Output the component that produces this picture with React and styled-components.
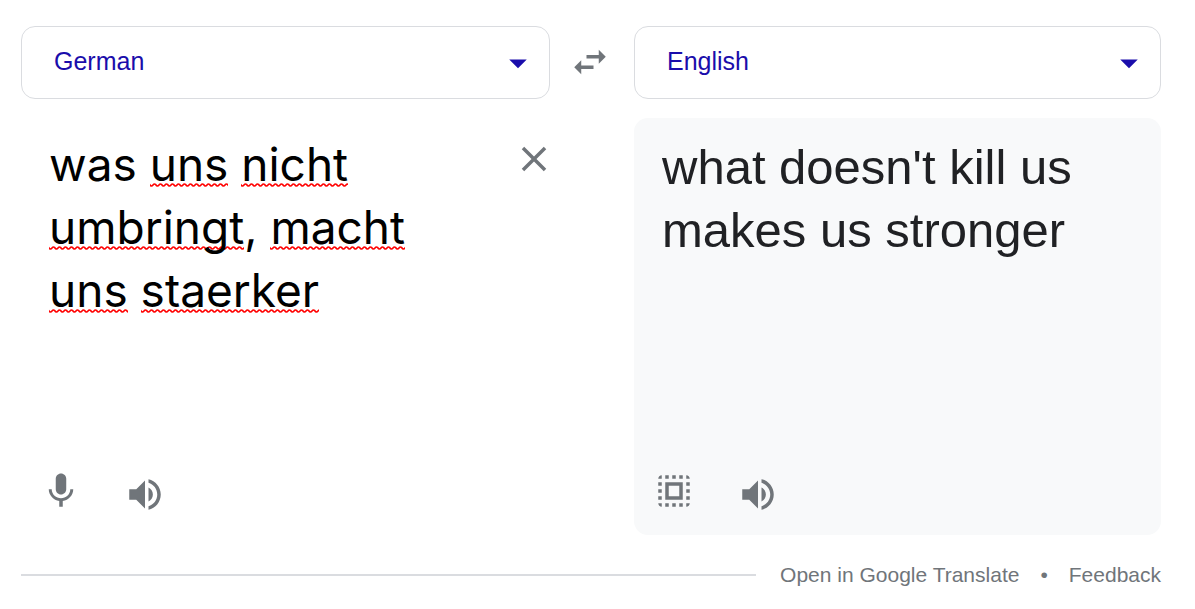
import React, { useState } from "react";
import styled, { createGlobalStyle } from "styled-components";

const GlobalStyle = createGlobalStyle`
  *, *::before, *::after { box-sizing: border-box; }
  body {
    margin: 0;
    background: #fff;
    color: #202124;
    font-family: "Liberation Sans", Arial, sans-serif;
  }
`;

const Widget = styled.main`
  padding: 26px 34px 16px 21px;
`;

const Columns = styled.div`
  display: grid;
  grid-template-columns: 529fr 84px 527fr;
  row-gap: 19px;
`;

const LanguageBox = styled.label`
  display: grid;
  align-items: center;
  height: 73px;
  color: #1a0dab;

  > * { grid-area: 1 / 1; }

  > svg {
    justify-self: end;
    margin-right: 11px;
    pointer-events: none;
  }
`;

const LanguageSelect = styled.select`
  appearance: none;
  width: 100%;
  height: 100%;
  padding: 0 56px 3px 32px;
  border: 1px solid #dadce0;
  border-radius: 14px;
  background: #fff;
  color: inherit;
  font: 25px "Liberation Sans", Arial, sans-serif;
  cursor: pointer;
`;

const IconButton = styled.button`
  display: flex;
  flex: none;
  padding: 0;
  border: 0;
  background: none;
  color: #70757a;
  cursor: pointer;
`;

const SwapCell = styled.div`
  display: flex;
  align-items: center;
  justify-content: center;
  padding: 0 4px 2px 0;
`;

const Panel = styled.section`
  display: flex;
  flex-direction: column;
  justify-content: space-between;
  min-height: 417px;
  padding: 15px 28px 23px;
  border-radius: 14px;
  background: ${(p) => (p.$filled ? "#f8f9fa" : "#fff")};
`;

const SourcePanel = styled(Panel)`
  padding-right: 0;
`;

const TargetPanel = styled(Panel)`
  grid-column: 3;
`;

const SourceRow = styled.div`
  display: flex;
  align-items: flex-start;
  justify-content: space-between;
`;

const ClearCell = styled.div`
  flex: none;
  padding: 5px 0;
  margin-right: -5px;
`;

const Editor = styled.div`
  display: grid;
  flex: 1;
  max-width: 420px;
  font: 46px/63px Inter, "Liberation Sans", sans-serif;
  color: #000;

  > * {
    grid-area: 1 / 1;
    margin: 0;
    padding: 0;
    white-space: pre-wrap;
    overflow-wrap: break-word;
  }
`;

const SpellLayer = styled.div`
  color: transparent;
  pointer-events: none;
`;

/* One 6px period of the red spell-check wave, repeated along the word. */
const squiggle =
  "data:image/svg+xml,%3Csvg xmlns='http://www.w3.org/2000/svg' width='6' height='4'%3E%3Cpath d='M-3 2Q-1.5 0 0 2T3 2T6 2T9 2' fill='none' stroke='red' stroke-width='1.6'/%3E%3C/svg%3E";

const Misspelled = styled.span`
  background: url("${squiggle}") 0 47px repeat-x;
`;

const SourceInput = styled.textarea`
  width: 100%;
  border: 0;
  outline: 0;
  resize: none;
  overflow: hidden;
  background: transparent;
  color: inherit;
  font: inherit;
`;

const Translation = styled.p`
  margin: 0;
  padding-top: 3px;
  font-size: 49px;
  line-height: 63px;
`;

const Tools = styled.div`
  display: flex;
  gap: 42px;
  margin-left: -9px;
`;

const Footer = styled.footer`
  display: flex;
  align-items: center;
  margin-top: 28px;
  color: #70757a;
  font-size: 21px;
  line-height: 24px;
`;

const Rule = styled.hr`
  flex: 1;
  height: 2px;
  margin: 0 24px 0 0;
  border: 0;
  background: #dadce0;
`;

const FooterLink = styled.a`
  color: inherit;
  text-decoration: none;
`;

const Dot = styled.span`
  padding: 0 21px;
`;

const paths = {
  caret: "M7 10l5 5 5-5z",
  swap: "M6.99 11L3 15l3.99 4v-3H14v-2H6.99v-3zM21 9l-3.99-4v3H10v2h7.01v3L21 9z",
  close:
    "M19 6.41L17.59 5 12 10.59 6.41 5 5 6.41 10.59 12 5 17.59 6.41 19 12 13.41 17.59 19 19 17.59 13.41 12z",
  mic: "M12 14c1.66 0 2.99-1.34 2.99-3L15 5c0-1.66-1.34-3-3-3S9 3.34 9 5v6c0 1.66 1.34 3 3 3zm5.3-3c0 3-2.54 5.1-5.3 5.1S6.7 14 6.7 11H5c0 3.41 2.72 6.23 6 6.72V21h2v-3.28c3.28-.48 6-3.3 6-6.72h-1.7z",
  speaker:
    "M3 9v6h4l5 5V4L7 9H3zm13.5 3c0-1.77-1.02-3.29-2.5-4.03v8.05c1.48-.73 2.5-2.25 2.5-4.02zM14 3.23v2.06c2.89.86 5 3.54 5 6.71s-2.11 5.85-5 6.71v2.06c4.01-.91 7-4.49 7-8.77s-2.99-7.86-7-8.77z",
  selectAll:
    "M3 5h2V3c-1.1 0-2 .9-2 2zm0 8h2v-2H3v2zm4 8h2v-2H7v2zM3 9h2V7H3v2zm10-6h-2v2h2V3zm6 0v2h2c0-1.1-.9-2-2-2zM5 21v-2H3c0 1.1.9 2 2 2zm-2-4h2v-2H3v2zM9 3H7v2h2V3zm2 18h2v-2h-2v2zm8-8h2v-2h-2v2zm0 8c1.1 0 2-.9 2-2h-2v2zm0-12h2V7h-2v2zm0 8h2v-2h-2v2zm-4 4h2v-2h-2v2zm0-16h2V3h-2v2zM7 17h10V7H7v10zm2-8h6v6H9V9z",
};

function Icon({ name, viewBox = "0 0 24 24" }) {
  return (
    <svg width="42" height="42" viewBox={viewBox} fill="currentColor" aria-hidden="true">
      <path d={paths[name]} />
    </svg>
  );
}

const SpeakerIcon = () => <Icon name="speaker" viewBox="0 -2 24 24" />;

function Language({ label, value, onChange }) {
  return (
    <LanguageBox>
      <LanguageSelect aria-label={label} value={value} onChange={(e) => onChange(e.target.value)}>
        <option>German</option>
        <option>English</option>
      </LanguageSelect>
      <Icon name="caret" />
    </LanguageBox>
  );
}

const unknownWords = new Set(["uns", "nicht", "umbringt", "macht", "staerker"]);

export default function App() {
  const [from, setFrom] = useState("German");
  const [to, setTo] = useState("English");
  const [text, setText] = useState("was uns nicht umbringt, macht uns staerker");

  const swap = () => {
    setFrom(to);
    setTo(from);
  };

  return (
    <>
      <GlobalStyle />
      <Widget>
        <Columns>
          <Language label="Translate from" value={from} onChange={setFrom} />
          <SwapCell>
            <IconButton type="button" aria-label="Swap languages" onClick={swap}>
              <Icon name="swap" />
            </IconButton>
          </SwapCell>
          <Language label="Translate to" value={to} onChange={setTo} />

          <SourcePanel>
            <SourceRow>
              <Editor>
                <SpellLayer aria-hidden="true">
                  {text.split(/(\w+)/).map((part, i) =>
                    unknownWords.has(part) ? <Misspelled key={i}>{part}</Misspelled> : part
                  )}
                </SpellLayer>
                <SourceInput
                  aria-label="Source text"
                  spellCheck={false}
                  value={text}
                  onChange={(e) => setText(e.target.value)}
                />
              </Editor>
              <ClearCell>
                <IconButton type="button" aria-label="Clear text" onClick={() => setText("")}>
                  <Icon name="close" />
                </IconButton>
              </ClearCell>
            </SourceRow>
            <Tools>
              <IconButton type="button" aria-label="Speak">
                <Icon name="mic" />
              </IconButton>
              <IconButton type="button" aria-label="Listen to source">
                <SpeakerIcon />
              </IconButton>
            </Tools>
          </SourcePanel>

          <TargetPanel $filled>
            <Translation>what doesn't kill us makes us stronger</Translation>
            <Tools>
              <IconButton type="button" aria-label="Select all">
                <Icon name="selectAll" />
              </IconButton>
              <IconButton type="button" aria-label="Listen to translation">
                <SpeakerIcon />
              </IconButton>
            </Tools>
          </TargetPanel>
        </Columns>

        <Footer>
          <Rule />
          <FooterLink href="#translate">Open in Google Translate</FooterLink>
          <Dot>•</Dot>
          <FooterLink href="#feedback">Feedback</FooterLink>
        </Footer>
      </Widget>
    </>
  );
}
